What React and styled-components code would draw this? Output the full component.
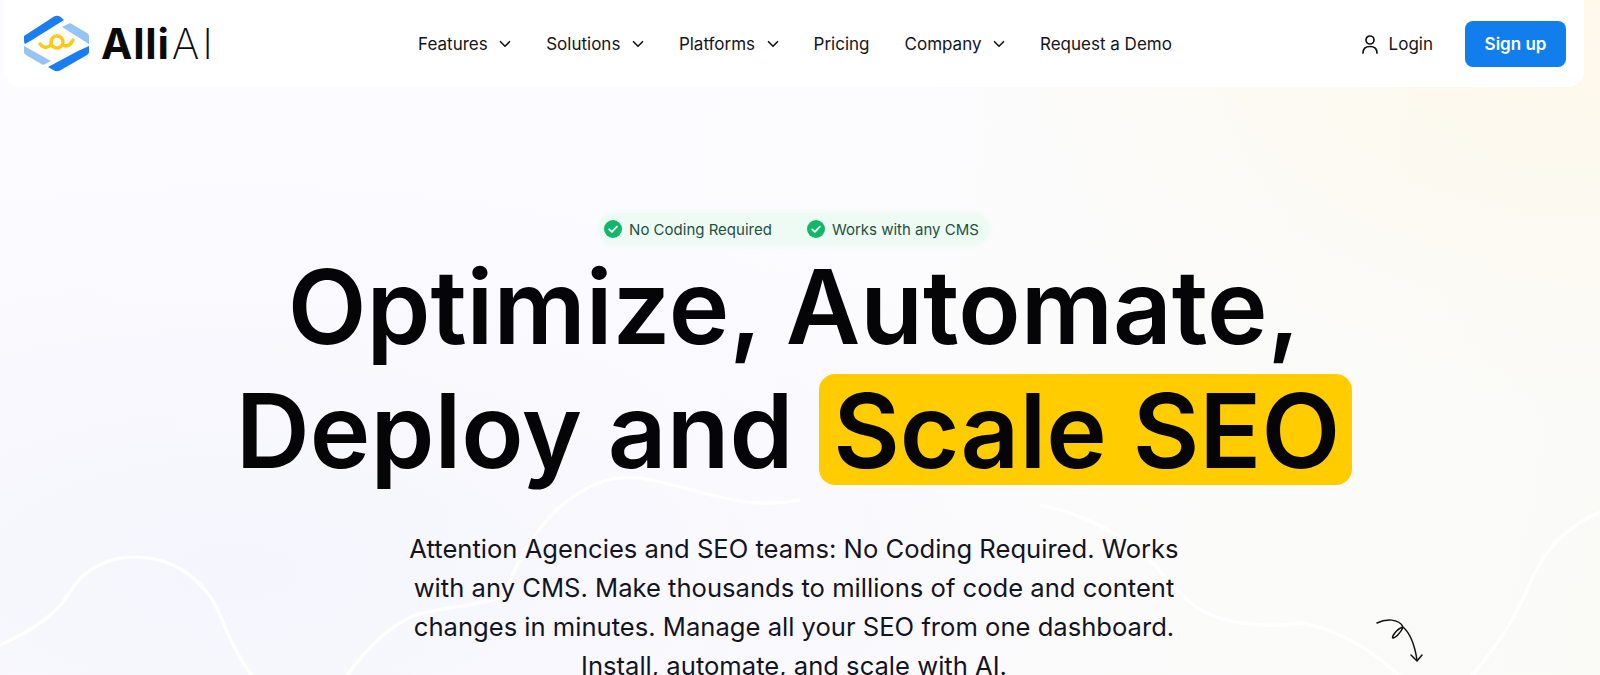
import React from 'react';
import styled, { createGlobalStyle } from 'styled-components';
import { ChevronDown } from 'lucide-react';

const GlobalStyle = createGlobalStyle`
  html, body {
    margin: 0;
    padding: 0;
    height: 100%;
    overflow: hidden;
  }

  body {
    font-family: 'Inter', 'Liberation Sans', sans-serif;
    color: #0b0b12;
  }
`;

const NAV_ITEMS = [
  { label: 'Features', hasMenu: true },
  { label: 'Solutions', hasMenu: true },
  { label: 'Platforms', hasMenu: true },
  { label: 'Pricing' },
  { label: 'Company', hasMenu: true },
  { label: 'Request a Demo' },
];

const Logo = () => (
  <LogoWrap>
    <svg width="66" height="57" viewBox="24 16 66 57" aria-hidden="true">
      <path d="M24 37 L54 17.500 Q57 16 60 17.500 L64 21 L32 41 L25 45 Q24 44 24 42 Z" fill="#1a7df0" />
      <path d="M62 28 L70 24 L87 34 Q89 35 89 37 L89 45 Z" fill="#97c3f7" />
      <path d="M24 47 L51 62 L43 66 L26 56 Q24 55 24 53 Z" fill="#97c3f7" />
      <path d="M89 47 L89 53 Q89 55 87 56 L60 71.500 Q57 73 54 71.500 L48 68 L78 52 Z" fill="#1a7df0" />
      <g fill="none" stroke="#fcc917" strokeWidth="3.500" strokeLinecap="round">
        <circle cx="57" cy="43" r="6" />
        <path d="M40 45 Q45 51 51 46" />
        <path d="M63 46 Q69 49 73 41" />
      </g>
    </svg>
    <LogoText>
      Alli<LogoThin>AI</LogoThin>
    </LogoText>
  </LogoWrap>
);

const UserIcon = () => (
  <svg width="16" height="20" viewBox="0 0 16 20" fill="none" stroke="#111" strokeWidth="1.7" aria-hidden="true">
    <circle cx="8" cy="6" r="4" />
    <path d="M1 19 C1 14.500 4 12.500 8 12.500 C12 12.500 15 14.500 15 19" strokeLinecap="round" />
  </svg>
);

const CheckBadge = () => (
  <svg width="18" height="18" viewBox="0 0 18 18" aria-hidden="true">
    <circle cx="9" cy="9" r="9" fill="#12b76a" />
    <path d="M5.200 9.300 L7.900 11.800 L12.800 6.600" fill="none" stroke="#fff" strokeWidth="1.800" strokeLinecap="round" strokeLinejoin="round" />
  </svg>
);

const Waves = () => (
  <WaveLayer viewBox="0 0 1600 675" preserveAspectRatio="none" aria-hidden="true">
    <path d="M0 645 C30 632 55 615 68 595 C85 565 115 556 136 557 C175 558 205 580 220 615 C232 645 243 665 254 678" />
    <path d="M345 678 C365 650 385 630 412 616 C445 606 475 607 505 596 C525 530 580 470 640 478 C700 488 740 512 800 500" />
    <path d="M1040 505 C1090 515 1130 540 1155 565 C1175 590 1190 605 1205 612 C1230 625 1270 628 1300 623 C1335 628 1370 648 1402 678" />
    <path d="M1470 678 C1490 655 1512 625 1527 590 C1545 545 1570 525 1600 512" />
  </WaveLayer>
);

const Arrow = () => (
  <ArrowMark width="50" height="50" viewBox="0 0 50 50" fill="none" stroke="#111" strokeWidth="1.500" strokeLinecap="round" strokeLinejoin="round" aria-hidden="true">
    <path d="M2 6 C10 2 24 1 28 10 C26 16 20 21 18 21 C16 21 21 12 28 10 C36 17 40 30 42 43" />
    <path d="M36 38 L42 44 L47 38" />
  </ArrowMark>
);

export default function App() {
  return (
    <Page>
      <GlobalStyle />
      <Waves />
      <Header>
        <Logo />
        <Nav>
          {NAV_ITEMS.map((item) => (
            <NavLink key={item.label}>
              {item.label}
              {item.hasMenu && <ChevronDown size={18} strokeWidth={2.2} />}
            </NavLink>
          ))}
        </Nav>
        <Actions>
          <LoginLink>
            <UserIcon />
            Login
          </LoginLink>
          <SignUp>Sign up</SignUp>
        </Actions>
      </Header>
      <Hero>
        <Pills>
          <Pill>
            <CheckBadge />
            No Coding Required
          </Pill>
          <Pill>
            <CheckBadge />
            Works with any CMS
          </Pill>
        </Pills>
        <Title>
          Optimize, Automate,
          <br />
          Deploy and <Highlight>Scale SEO</Highlight>
        </Title>
        <Lead>
          Attention Agencies and SEO teams: No Coding Required. Works with any CMS. Make thousands to millions of code
          and content changes in minutes. Manage all your SEO from one dashboard. Install, automate, and scale with AI.
        </Lead>
      </Hero>
      <Arrow />
    </Page>
  );
}

const Page = styled.div`
  position: relative;
  height: 675px;
  overflow: hidden;
  background:
    radial-gradient(ellipse 640px 420px at 100% 0%, #fff9ea 0%, rgba(255, 249, 234, 0) 100%),
    radial-gradient(ellipse 900px 420px at 15% 85%, #f5f5fd 0%, rgba(245, 245, 253, 0) 100%),
    linear-gradient(100deg, #fcfbff 0%, #fcfcff 45%, #fbfbfb 70%, #fafaf7 100%);
`;

const WaveLayer = styled.svg`
  position: absolute;
  inset: 0;
  width: 100%;
  height: 100%;

  path {
    fill: none;
    stroke: #fff;
    stroke-width: 3.500;
    opacity: 0.9;
  }
`;

const Header = styled.header`
  position: relative;
  display: grid;
  grid-template-columns: 1fr auto 1fr;
  align-items: center;
  height: 87px;
  margin: 0 16px 0 5px;
  padding: 0 18px 0 19px;
  background: #fff;
  border-radius: 0 0 16px 16px;
`;

const LogoWrap = styled.div`
  display: flex;
  align-items: center;
  gap: 11px;
`;

const LogoText = styled.span`
  font-size: 42px;
  font-weight: 700;
  line-height: 1;
  letter-spacing: 0.8px;
  color: #0a0a0a;
`;

const LogoThin = styled.span`
  margin-left: 2px;
  font-weight: 200;
  letter-spacing: 3px;
`;

const Nav = styled.nav`
  display: flex;
  align-items: center;
  gap: 35px;
`;

const NavLink = styled.a`
  display: flex;
  align-items: center;
  gap: 8.500px;
  font-size: 17px;
  font-weight: 400;
  color: #14141c;

  svg {
    margin-right: -3px;
  }
`;

const Actions = styled.div`
  display: flex;
  align-items: center;
  justify-content: flex-end;
  gap: 32px;
`;

const LoginLink = styled.a`
  display: flex;
  align-items: center;
  gap: 11px;
  font-size: 17px;
  color: #14141c;
`;

const SignUp = styled.button`
  width: 101px;
  height: 46px;
  border: 0;
  border-radius: 8px;
  background: #127eee;
  color: #fff;
  font-family: inherit;
  font-size: 17px;
  font-weight: 600;
`;

const Hero = styled.main`
  position: relative;
  display: flex;
  flex-direction: column;
  align-items: center;
  padding: 126px 12px 0 0;
  text-align: center;
`;

const Pills = styled.div`
  display: flex;
  align-items: center;
  gap: 35px;
  height: 32px;
  padding: 0 10px 0 5px;
  border-radius: 16px;
  background: #eefbf5;
  box-shadow: 0 0 6px 1px #eefbf5;
`;

const Pill = styled.span`
  display: flex;
  align-items: center;
  gap: 7px;
  font-size: 15px;
  color: #24503f;
`;

const Title = styled.h1`
  margin: 0;
  font-size: 102.500px;
  font-weight: 600;
  line-height: 124px;
  color: #050508;
`;

const Highlight = styled.span`
  display: inline-block;
  padding: 4px 12px 0 14px;
  border-radius: 16px;
  background: #ffcc00;
  line-height: 107px;
`;

const Lead = styled.p`
  width: 790px;
  margin: 36px 0 0;
  font-size: 25.600px;
  line-height: 39px;
  color: #14141f;
`;

const ArrowMark = styled.svg`
  position: absolute;
  left: 1375px;
  top: 617px;
`;
